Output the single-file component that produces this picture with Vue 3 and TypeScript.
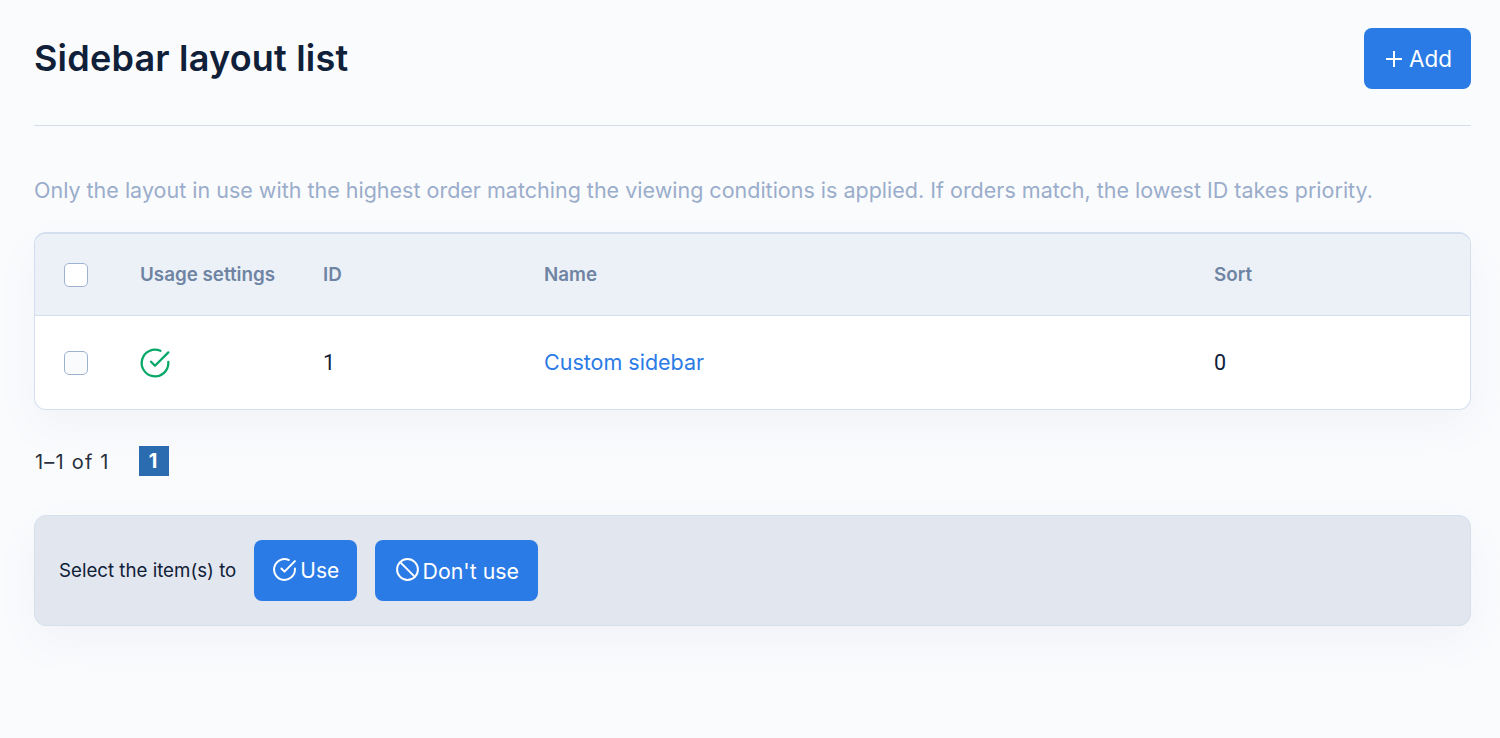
<script setup lang="ts">
interface Row { id: number; name: string; sort: number }
const rows: Row[] = [{ id: 1, name: 'Custom sidebar', sort: 0 }]
</script>

<template>
  <div class="page">
    <header class="head">
      <h1>Sidebar layout list</h1>
      <a class="btn add" href="#"><svg class="plus" viewBox="0 0 16 16"><path d="M8 0v16M0 8h16" /></svg> Add</a>
    </header>
    <p class="desc">Only the layout in use with the highest order matching the viewing conditions is applied. If orders match, the lowest ID takes priority.</p>
    <div class="table-wrap">
      <table>
        <thead>
          <tr>
            <th class="c-check"><span class="check"></span></th>
            <th class="c-use">Usage settings</th>
            <th class="c-id">ID</th>
            <th class="c-name">Name</th>
            <th>Sort</th>
          </tr>
        </thead>
        <tbody>
          <tr v-for="r in rows" :key="r.id">
            <td class="c-check"><span class="check light"></span></td>
            <td class="c-use">
              <svg class="ok" viewBox="0 0 24 24"><path d="M22 11.08V12a10 10 0 1 1-5.93-9.14" /><path d="M22 4 12 14.01l-3-3" /></svg>
            </td>
            <td class="num">{{ r.id }}</td>
            <td class="name"><a class="link" href="#">{{ r.name }}</a></td>
            <td class="num">{{ r.sort }}</td>
          </tr>
        </tbody>
      </table>
    </div>
    <div class="pager">
      <span class="range">1–1 of 1</span>
      <strong class="page-num">1</strong>
    </div>
    <div class="bulk">
      <span class="bulk-label">Select the item(s) to</span>
      <a class="btn small use" href="#">
        <svg class="ico" viewBox="0 0 24 24"><path d="M22 11.08V12a10 10 0 1 1-5.93-9.14" /><path d="M22 4 12 14.01l-3-3" /></svg>
        <span>Use</span>
      </a>
      <a class="btn small dont" href="#">
        <svg class="ico" viewBox="0 0 24 24"><circle cx="12" cy="12" r="10" /><path d="M4.93 4.93l14.14 14.14" /></svg>
        <span>Don't use</span>
      </a>
    </div>
  </div>
</template>

<style>
html, body { margin: 0; background: #fafbfd; }
</style>

<style scoped>
.page {
  box-sizing: border-box;
  height: 738px;
  padding: 28px 29px 0 34px;
  font-family: Inter, "Liberation Sans", sans-serif;
  color: #0f2038;
  overflow: hidden;
}
.head {
  display: flex;
  justify-content: space-between;
  align-items: center;
  padding-bottom: 36px;
  border-bottom: 1px solid #d5deea;
}
h1 {
  margin: 0;
  font-size: 36px;
  font-weight: 600;
  letter-spacing: 0.2px;
  line-height: 61px;
}
.btn {
  display: inline-flex;
  align-items: center;
  justify-content: center;
  box-sizing: border-box;
  height: 61px;
  background: #2b7be6;
  color: #fff;
  border-radius: 8px;
  text-decoration: none;
  font-size: 21px;
}
.add { width: 107px; gap: 7px; font-size: 22.5px; padding-left: 3px; }
.plus { width: 16px; height: 16px; fill: none; stroke: #fff; stroke-width: 2; }
.desc {
  margin: 50px 0 0;
  font-size: 21.5px;
  line-height: 28px;
  color: #9aadcb;
}
.table-wrap {
  margin-top: 28px;
  background: #fff;
  border: 1px solid #d3deee;
  border-top-width: 2px;
  border-radius: 12px;
  overflow: hidden;
  box-shadow: 0 16px 40px rgba(100, 120, 160, 0.06);
}
table { width: 100%; border-collapse: collapse; table-layout: fixed; }
th {
  height: 81px;
  padding: 0;
  text-align: left;
  background: #ecf1f8;
  color: #6f84a3;
  font-size: 18.8px;
  font-weight: 600;
  border-bottom: 1px solid #d3deee;
}
td { height: 93px; padding: 0; font-size: 21.5px; }
td.name { padding-bottom: 2px; box-sizing: border-box; }
.c-check { width: 105px; padding-left: 29px; box-sizing: border-box; }
.c-use { width: 183px; }
.c-id { width: 221px; }
.c-name { width: 670px; }
.check {
  display: block;
  box-sizing: border-box;
  width: 24px;
  height: 24px;
  background: #fff;
  border: 1px solid #9db1d0;
  border-radius: 5px;
}
.check.light { background: #fafbfd; }
.ok { display: block; width: 32px; height: 32px; margin-left: -1px; fill: none; stroke: #05a866; stroke-width: 1.7; stroke-linecap: round; stroke-linejoin: round; }
.num { font-family: Roboto, "Liberation Sans", sans-serif; font-size: 21.5px; color: #0f2038; }
.link { color: #2b7be6; text-decoration: none; }
.pager {
  display: flex;
  align-items: center;
  gap: 30px;
  margin-top: 36px;
  font-size: 20px;
  color: #28303e;
}
.range { width: 74px; padding: 2px 0 0 1px; letter-spacing: 1.2px; white-space: nowrap; }
.page-num {
  width: 30px;
  height: 30px;
  line-height: 30px;
  padding-right: 2px;
  box-sizing: border-box;
  text-align: center;
  background: #2b6cb0;
  color: #fff;
  font-size: 20px;
}
.bulk {
  display: flex;
  align-items: center;
  box-sizing: border-box;
  height: 111px;
  margin-top: 39px;
  padding-left: 24px;
  background: #e2e6ee;
  border: 1px solid #d6e0ec;
  border-radius: 12px;
  box-shadow: 0 16px 40px rgba(100, 120, 160, 0.06);
}
.bulk-label { font-size: 18.7px; line-height: 24px; margin-right: 18px; padding-top: 1px; white-space: nowrap; }
.small { gap: 3px; margin-right: 18px; line-height: 26px; }
.use { width: 103px; }
.dont { width: 163px; font-size: 21.3px; }
.ico { width: 25px; height: 25px; margin-top: -3px; fill: none; stroke: #fff; stroke-width: 1.9; stroke-linecap: round; stroke-linejoin: round; }
</style>
